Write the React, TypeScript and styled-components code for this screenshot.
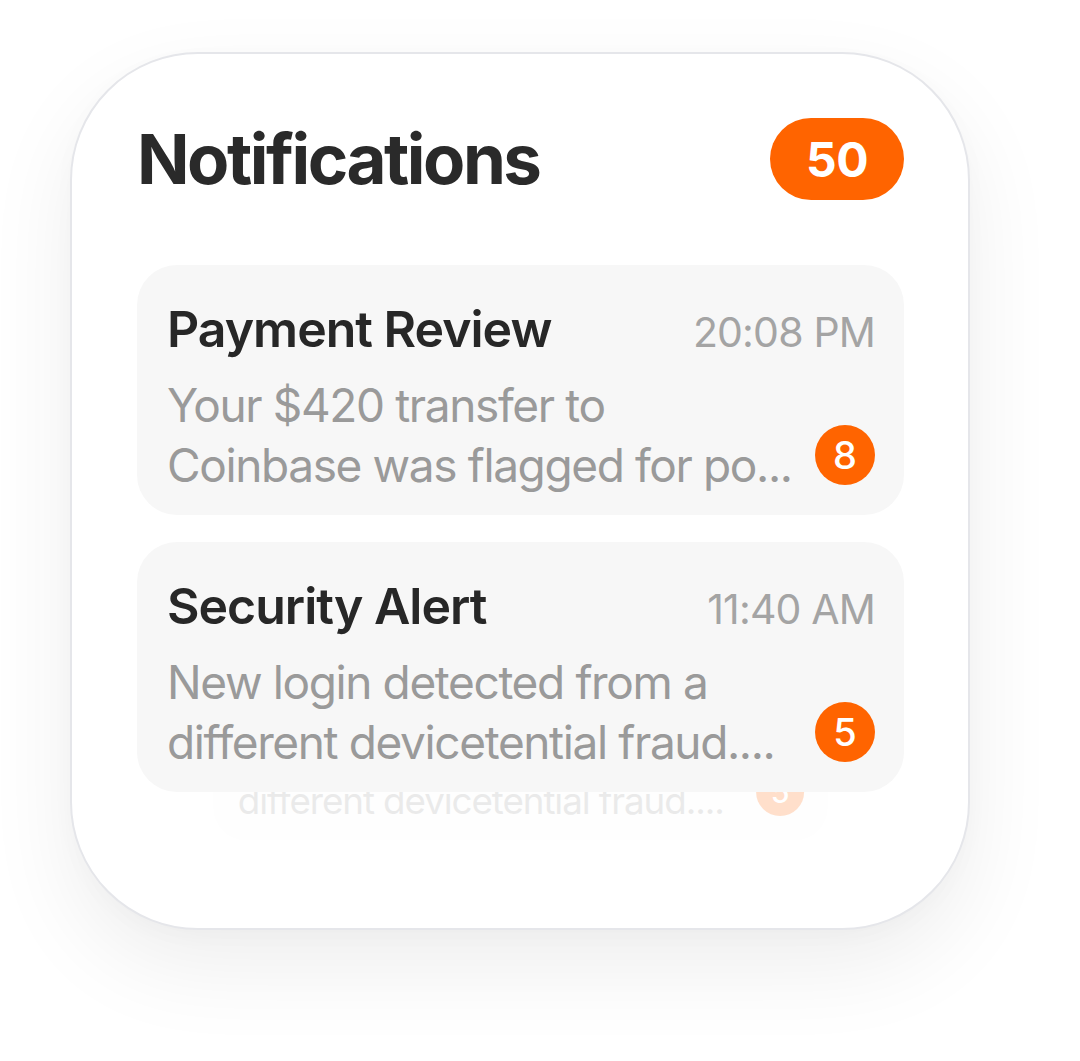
import React from "react";
import styled, { createGlobalStyle } from "styled-components";

const Global = createGlobalStyle`
  html, body { margin: 0; padding: 0; background: #ffffff; }
  body { font-family: Inter, "Noto Sans", "Liberation Sans", sans-serif; -webkit-font-smoothing: antialiased; }
`;

const Page = styled.div`
  padding: 52px 0 0 70px;
  width: 1080px;
  height: 1061px;
  box-sizing: border-box;
`;

const Widget = styled.section`
  width: 900px;
  height: 878px;
  box-sizing: border-box;
  background: #ffffff;
  border: 2px solid #e5e6ea;
  border-radius: 128px;
  box-shadow: 0 36px 90px rgba(0, 0, 0, 0.07), 0 6px 24px rgba(0, 0, 0, 0.02);
  padding: 64px 64px 0 65px;
  display: flex;
  flex-direction: column;
  gap: 65px;
`;

const Header = styled.header`
  display: flex;
  align-items: center;
  justify-content: space-between;
  height: 82px;
`;

const Title = styled.h1`
  margin: 0;
  font-size: 69px;
  font-weight: 700;
  letter-spacing: -0.036em;
  color: #2a2a2a;
  line-height: 1;
`;

const CountPill = styled.div`
  height: 82px;
  min-width: 134px;
  box-sizing: border-box;
  border-radius: 41px;
  background: #ff6400;
  color: #ffffff;
  font-size: 48px;
  font-weight: 700;
  letter-spacing: -0.01em;
  display: flex;
  align-items: center;
  justify-content: center;
`;

const List = styled.div`
  position: relative;
  display: flex;
  flex-direction: column;
  gap: 27px;
`;

const Item = styled.article<{ $ghost?: boolean }>`
  position: relative;
  z-index: ${(p) => (p.$ghost ? 0 : 1)};
  height: 250px;
  box-sizing: border-box;
  background: #f7f7f7;
  border-radius: 40px;
  padding: 34px 29px 0 30px;
  display: flex;
  flex-direction: column;
  gap: 16px;
  overflow: hidden;
`;

const Ghost = styled(Item)`
  position: absolute;
  left: 0;
  right: 0;
  top: 277px;
  transform-origin: top center;
  transform: translateY(98px) scale(0.8);
  opacity: 0.2;
  background: #fbfbfb;
`;

const ItemHead = styled.div`
  display: flex;
  align-items: baseline;
  justify-content: space-between;
`;

const ItemTitle = styled.h2`
  margin: 0;
  font-size: 50px;
  font-weight: 600;
  letter-spacing: -0.02em;
  color: #272727;
  line-height: 60px;
`;

const Time = styled.span`
  font-size: 41px;
  font-weight: 400;
  letter-spacing: -0.02em;
  color: #a4a4a4;
`;

const ItemBody = styled.div`
  flex: 1;
  display: flex;
  align-items: flex-start;
  justify-content: space-between;
`;

const Message = styled.p`
  margin: 0;
  width: 636px;
  font-size: 46px;
  font-weight: 400;
  letter-spacing: -0.03em;
  line-height: 60px;
  color: #9a9a9a;
`;

const Dot = styled.span`
  align-self: flex-end;
  width: 60px;
  height: 60px;
  border-radius: 50%;
  background: #ff6400;
  color: #ffffff;
  font-size: 38px;
  font-weight: 500;
  display: flex;
  align-items: center;
  justify-content: center;
  margin-bottom: 30px;
  flex-shrink: 0;
`;

type Note = { title: string; time: string; text: string; count: number };

const notes: Note[] = [
  {
    title: "Payment Review",
    time: "20:08 PM",
    text: "Your $420 transfer to Coinbase was flagged for po...",
    count: 8,
  },
  {
    title: "Security Alert",
    time: "11:40 AM",
    text: "New login detected from a different devicetential fraud....",
    count: 5,
  },
];

const NoteContent = ({ n }: { n: Note }) => (
  <>
    <ItemHead>
      <ItemTitle>{n.title}</ItemTitle>
      <Time>{n.time}</Time>
    </ItemHead>
    <ItemBody>
      <Message>{n.text}</Message>
      <Dot>{n.count}</Dot>
    </ItemBody>
  </>
);

export default function App() {
  return (
    <Page>
      <Global />
      <Widget>
        <Header>
          <Title>Notifications</Title>
          <CountPill>50</CountPill>
        </Header>
        <List>
          {notes.map((n) => (
            <Item key={n.title}>
              <NoteContent n={n} />
            </Item>
          ))}
          <Ghost $ghost aria-hidden>
            <NoteContent n={notes[1]} />
          </Ghost>
        </List>
      </Widget>
    </Page>
  );
}
